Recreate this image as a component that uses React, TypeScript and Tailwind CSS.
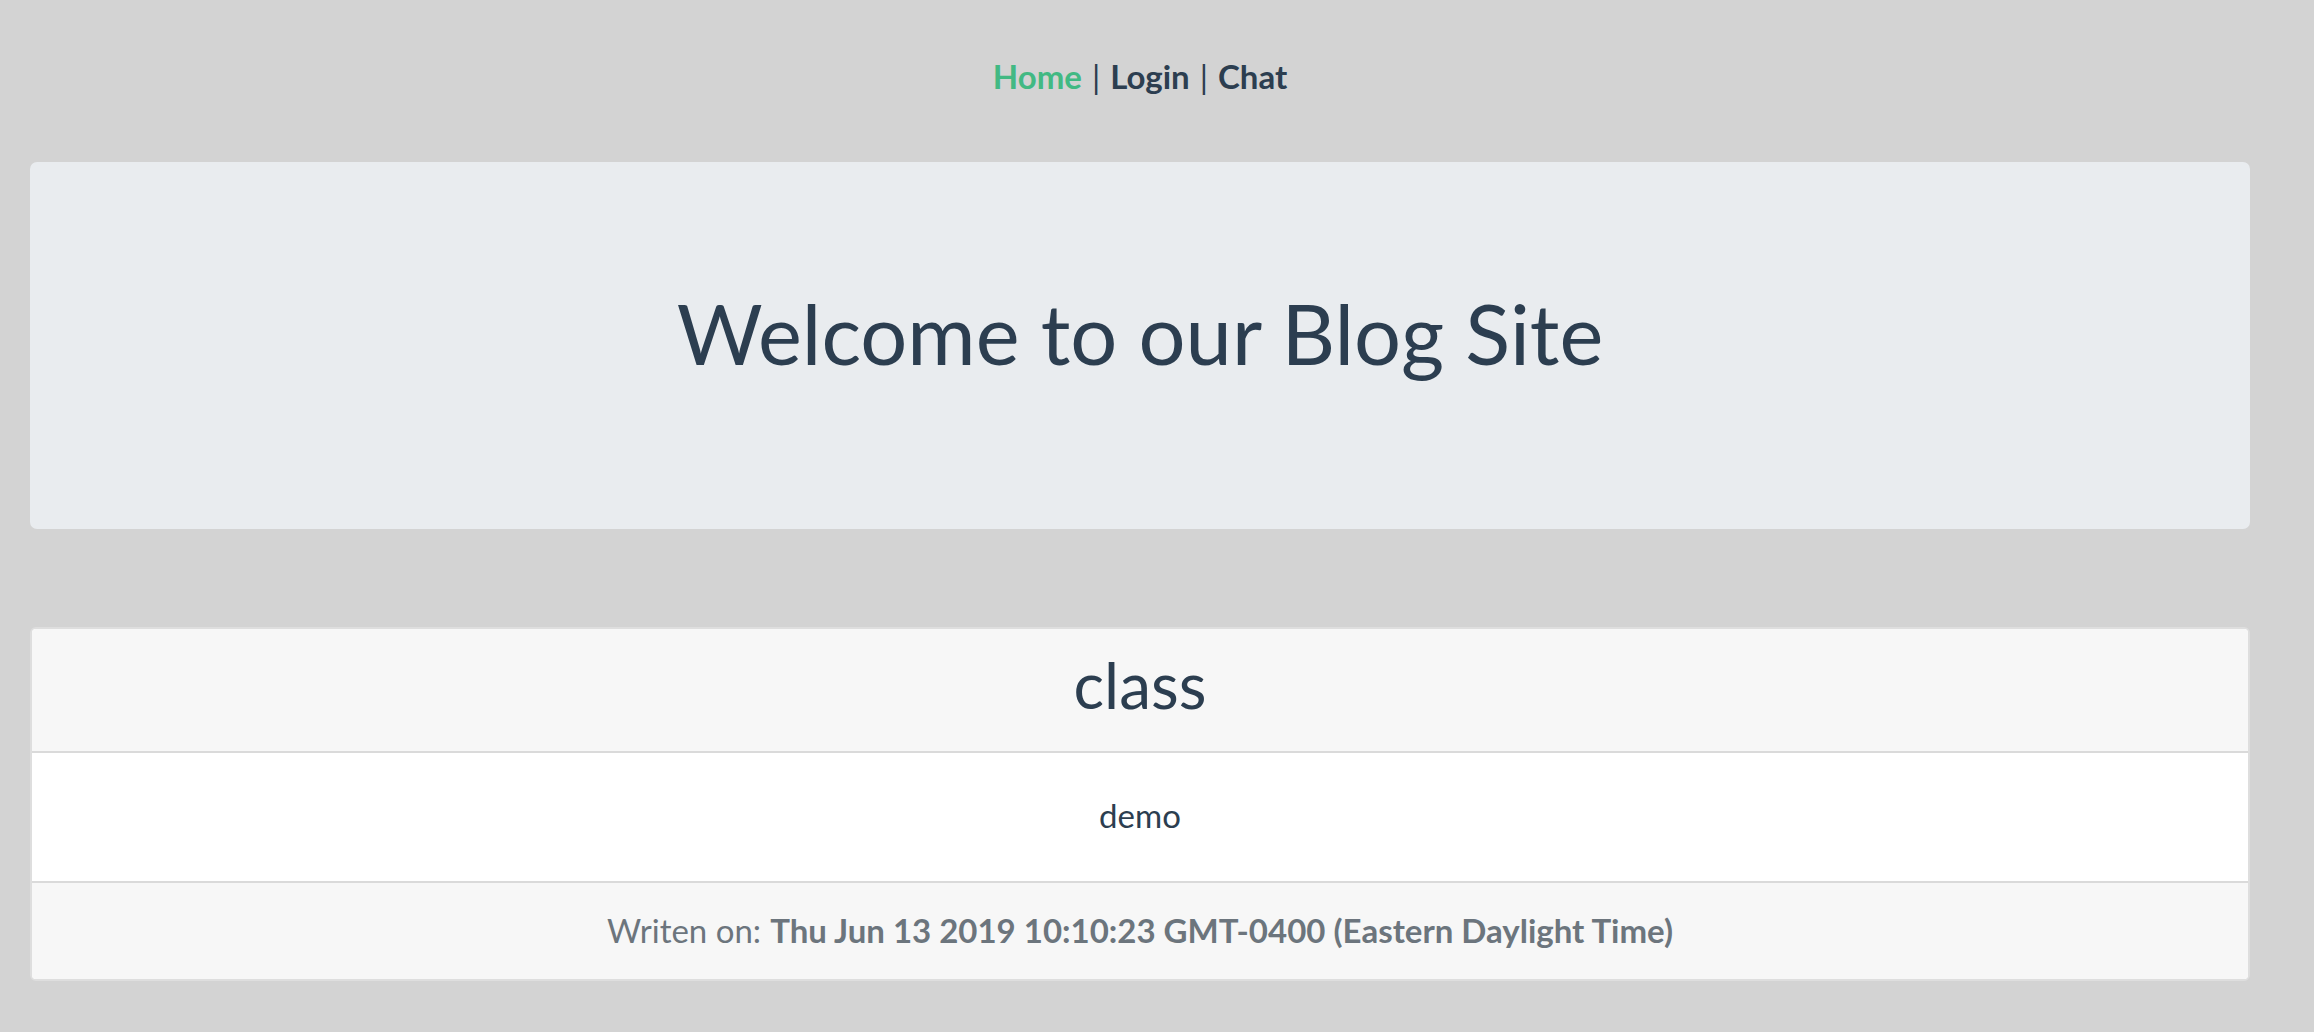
import React from "react";

export default function App() {
  return (
    <div
      className="min-h-screen bg-[#d3d3d3] pr-[34px] text-[#2c3e50]"
      style={{ fontFamily: "Lato, 'Noto Sans', sans-serif" }}
    >
      <nav className="flex h-[162px] items-start justify-center pt-[56px] text-[33px] font-bold leading-[40px]">
        <a className="text-[#42b983]">Home</a>
        <span className="mx-[10px] font-normal">|</span>
        <a>Login</a>
        <span className="mx-[10px] font-normal">|</span>
        <a>Chat</a>
      </nav>
      <div className="mx-[30px] flex h-[367px] items-center justify-center rounded-[7px] bg-[#e9ecef]">
        <h1 className="pb-[24px] text-[83px] font-normal leading-none">Welcome to our Blog Site</h1>
      </div>
      <div className="mx-[30px] mt-[98px] overflow-hidden rounded-[6px] border-2 border-[#dedede] bg-white">
        <div className="flex h-[124px] items-center justify-center border-b-2 border-[#dadada] bg-[#f7f7f7]">
          <h2 className="pb-[10px] text-[64px] font-normal leading-none">class</h2>
        </div>
        <div className="flex h-[130px] items-center justify-center border-b-2 border-[#dadada]">
          <p className="pb-[4px] text-[33px] leading-none">demo</p>
        </div>
        <div className="flex h-[96px] items-center justify-center bg-[#f7f7f7] text-[33px] text-[#6c757d]">
          <span>Writen on: </span>
          <span className="ml-[9px] font-bold">Thu Jun 13 2019 10:10:23 GMT-0400 (Eastern Daylight Time)</span>
        </div>
      </div>
    </div>
  );
}
